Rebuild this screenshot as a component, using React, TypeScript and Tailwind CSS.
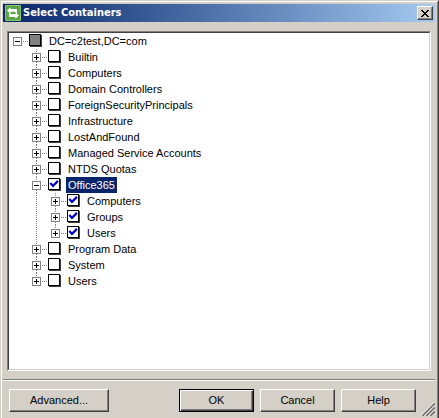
import { useState } from 'react';

type TreeNode = {
    name: string;
    checked?: boolean;
    mixed?: boolean;
    open?: boolean;
    children?: TreeNode[];
};

const root: TreeNode = {
    name: 'DC=c2test,DC=com',
    mixed: true,
    open: true,
    children: [
        { name: 'Builtin' },
        { name: 'Computers' },
        { name: 'Domain Controllers' },
        { name: 'ForeignSecurityPrincipals' },
        { name: 'Infrastructure' },
        { name: 'LostAndFound' },
        { name: 'Managed Service Accounts' },
        { name: 'NTDS Quotas' },
        {
            name: 'Office365',
            checked: true,
            open: true,
            children: [
                { name: 'Computers', checked: true },
                { name: 'Groups', checked: true },
                { name: 'Users', checked: true },
            ],
        },
        { name: 'Program Data' },
        { name: 'System' },
        { name: 'Users' },
    ],
};

const raised = 'border border-t-white border-l-white border-r-[#404040] border-b-[#404040] bg-[#d4d0c8] shadow-[inset_-1px_-1px_0_#808080]';

// dotted tree lines, one pixel on and one off
const dotsDown = 'w-px bg-[repeating-linear-gradient(to_bottom,#808080_0_1px,transparent_1px_2px)]';
const dotsAcross = 'h-px bg-[repeating-linear-gradient(to_right,transparent_0_1px,#808080_1px_2px)]';

type RowProps = {
    node: TreeNode;
    path: string;
    guides: boolean[];
    isLast: boolean;
    selected: string;
    onSelect: (path: string) => void;
};

function TreeRow({ node, path, guides, isLast, selected, onSelect }: RowProps) {
    const [open, setOpen] = useState(!!node.open);
    const [checked, setChecked] = useState(!!node.checked);
    const isRoot = path === root.name;
    const children = node.children || [];

    return (
        <li>
            <div className="flex h-4">
                {guides.map((line, i) => (
                    <span key={i} className="w-[19px] shrink-0 pl-1">
                        {line && <span className={'block h-4 ' + dotsDown} />}
                    </span>
                ))}
                <span className="flex w-[9px] shrink-0 flex-col items-center">
                    <span className={isRoot ? 'h-1' : 'h-1 ' + dotsDown} />
                    <button
                        type="button"
                        aria-label={(open ? 'Collapse ' : 'Expand ') + node.name}
                        onClick={() => setOpen(!open)}
                        className="size-[9px] border border-[#808080] bg-white text-black"
                    >
                        <svg viewBox="0 0 7 7" className="block size-[7px]" shapeRendering="crispEdges">
                            <path d={open ? 'M1 3h5v1H1z' : 'M1 3h5v1H1zM3 1h1v5H3z'} fill="currentColor" />
                        </svg>
                    </button>
                    {!isRoot && !isLast && <span className={'h-[3px] ' + dotsDown} />}
                </span>
                <span className={'mt-2 w-[7px] shrink-0 ' + dotsAcross} />
                <label className="relative mt-px block size-[13px] shrink-0">
                    <input
                        type="checkbox"
                        aria-label={node.name}
                        checked={checked}
                        onChange={() => setChecked(!checked)}
                        className={
                            'block size-3 appearance-none border border-black shadow-[1px_1px_0_#404040] ' +
                            (node.mixed ? 'bg-[#808080]' : 'bg-white')
                        }
                    />
                    {checked && (
                        <svg viewBox="0 0 12 12" className="pointer-events-none absolute top-0 left-0 size-3">
                            <path d="M2.3 5 5 7.9l5-5" fill="none" stroke="#0000c8" strokeWidth="2.2" />
                        </svg>
                    )}
                </label>
                <button
                    type="button"
                    onClick={() => onSelect(path)}
                    className={
                        'ml-[5px] h-4 px-0.5 leading-4 whitespace-nowrap ' +
                        (selected === path ? 'bg-[#0a246a] text-white' : 'text-black')
                    }
                >
                    {node.name}
                </button>
            </div>
            {open && children.length > 0 && (
                <ul>
                    {children.map((child, i) => (
                        <TreeRow
                            key={child.name}
                            node={child}
                            path={path + '/' + child.name}
                            guides={[...guides, !isRoot && !isLast]}
                            isLast={i === children.length - 1}
                            selected={selected}
                            onSelect={onSelect}
                        />
                    ))}
                </ul>
            )}
        </li>
    );
}

function TitleBar() {
    return (
        <header className="flex h-[18px] items-center bg-linear-to-r from-[#0a246a] to-[#a6caf0] px-0.5">
            <svg viewBox="0 0 16 16" className="size-4 shrink-0">
                <rect width="16" height="16" rx="1" fill="#8cc474" />
                <rect x="1" y="1" width="14" height="14" fill="#5ba544" />
                <path d="M2 5.5 5.5 2.2V4H12v4h-1.6V6.8H5.5v2z" fill="#fff" />
                <path d="M14 10.5l-3.5-3.3V9H5.6V7.8H4V12h6.5v1.8z" fill="#fff" />
                <path d="M5.6 7.9h4.8" stroke="#5ba544" />
            </svg>
            <h1 className="ml-0.5 flex-1 truncate font-['DejaVu_Sans_Condensed','DejaVu_Sans',sans-serif] text-[11px] leading-4 font-bold text-white">
                Select Containers
            </h1>
            <button type="button" aria-label="Close" className={'flex h-3.5 w-4 items-center justify-center ' + raised}>
                <svg viewBox="0 0 8 7" className="h-[7px] w-2" shapeRendering="crispEdges">
                    <path
                        d="M0 0h2v1H0zM6 0h2v1H6zM1 1h2v1H1zM5 1h2v1H5zM2 2h4v1H2zM3 3h2v1H3zM2 4h4v1H2zM1 5h2v1H1zM5 5h2v1H5zM0 6h2v1H0zM6 6h2v1H6z"
                        fill="#000"
                    />
                </svg>
            </button>
        </header>
    );
}

export default function App() {
    const [selected, setSelected] = useState('DC=c2test,DC=com/Office365');

    return (
        <div className="flex min-h-screen flex-col border-t border-r border-l border-t-[#d4d0c8] border-r-[#404040] border-l-[#d4d0c8] bg-[#d4d0c8] font-['Liberation_Sans',Arial,sans-serif] text-[11px] text-black">
            <div className="flex flex-1 flex-col border-t border-r border-l border-t-white border-r-[#808080] border-l-white pt-0.5 pr-0.5 pl-px">
                <TitleBar />
                <main className="mx-1 mt-[9px] flex flex-1 flex-col border border-t-[#808080] border-r-white border-b-white border-l-[#808080]">
                    <div className="flex-1 border border-t-[#404040] border-r-[#d4d0c8] border-b-[#d4d0c8] border-l-[#404040] bg-white pl-1">
                        <ul>
                            <TreeRow node={root} path={root.name} guides={[]} isLast selected={selected} onSelect={setSelected} />
                        </ul>
                    </div>
                </main>
                <footer className="mt-2 flex border-t border-[#808080]">
                    <div className="flex flex-1 items-start border-t border-white pt-2 pb-1.5 pl-1.5">
                        <button type="button" className={'h-[23px] w-[100px] ' + raised}>Advanced...</button>
                        <div className="ml-auto flex gap-1.5">
                            <button type="button" className="h-[23px] w-[75px] border border-black bg-[#d4d0c8] shadow-[inset_1px_1px_0_#fff,inset_-1px_-1px_0_#404040,inset_-2px_-2px_0_#808080]">OK</button>
                            <button type="button" className={'h-[23px] w-[75px] ' + raised}>Cancel</button>
                            <button type="button" className={'h-[23px] w-[75px] ' + raised}>Help</button>
                        </div>
                        <svg viewBox="0 0 14 14" className="-mb-1 ml-[5px] size-3.5 shrink-0 self-end">
                            <path d="M0 13.5 13.5 0M4 13.5 13.5 4M8 13.5 13.5 8" stroke="#fff" fill="none" />
                            <path d="M1.4 13.8 13.8 1.4M5.4 13.8l8.4-8.4M9.4 13.8l4.4-4.4" stroke="#707070" strokeWidth="1.6" fill="none" />
                        </svg>
                    </div>
                </footer>
            </div>
        </div>
    );
}
